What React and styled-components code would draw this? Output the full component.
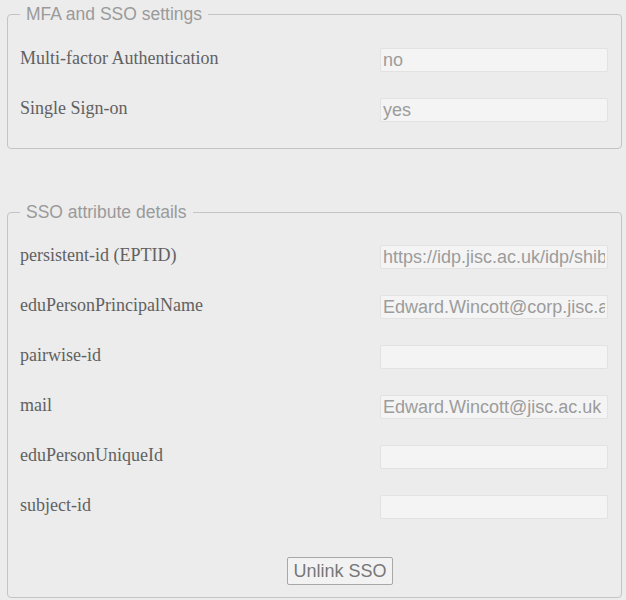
import React from "react";
import styled, { createGlobalStyle } from "styled-components";

const Global = createGlobalStyle`
  html, body { margin: 0; padding: 0; background: #ececec; }
  body { font-family: "Liberation Serif", "Times New Roman", serif; }
`;

const Page = styled.div`
  padding: 4px 4px 0 7px;
  display: flex;
  flex-direction: column;
  gap: 53px;
`;

const Fieldset = styled.fieldset`
  margin: 0;
  border: 1px solid #c4c4c4;
  border-radius: 4px;
  padding: ${(p) => p.$pad};
  min-width: 0;
`;

const Legend = styled.legend`
  font-family: "Liberation Sans", Arial, sans-serif;
  font-size: 17.5px;
  color: #9a9a9a;
  padding: 0 6px;
  margin-left: 0;
`;

const Grid = styled.div`
  display: grid;
  grid-template-columns: 1fr 228px;
  row-gap: 26px;
  align-items: center;
`;

const Label = styled.label`
  font-family: "Liberation Serif", "Times New Roman", serif;
  font-size: 18px;
  color: #616161;
  line-height: 24px;
  margin-top: -4px;
`;

const Input = styled.input`
  box-sizing: border-box;
  width: 228px;
  height: 24px;
  margin: 0;
  padding: 0 2px;
  border: 1px solid #e2e2e2;
  border-radius: 2px;
  background: #f4f4f4;
  font-family: "Liberation Sans", Arial, sans-serif;
  font-size: 18px;
  color: #9c9c9c;
  outline: none;
`;

const ButtonRow = styled.div`
  display: flex;
  justify-content: center;
  padding-left: 52px;
  margin-top: 38px;
`;

const Button = styled.button`
  box-sizing: border-box;
  height: 28px;
  padding: 0 5px;
  border: 1px solid #a8a8a8;
  border-radius: 2px;
  background: #f2f2f2;
  font-family: "Liberation Sans", Arial, sans-serif;
  font-size: 18px;
  color: #777;
`;

const mfa = [
  ["Multi-factor Authentication", "no"],
  ["Single Sign-on", "yes"],
];

const attrs = [
  ["persistent-id (EPTID)", "https://idp.jisc.ac.uk/idp/shibboleth"],
  ["eduPersonPrincipalName", "Edward.Wincott@corp.jisc.ac.uk"],
  ["pairwise-id", ""],
  ["mail", "Edward.Wincott@jisc.ac.uk"],
  ["eduPersonUniqueId", ""],
  ["subject-id", ""],
];

function Rows({ items }) {
  return (
    <Grid>
      {items.map(([l, v]) => (
        <React.Fragment key={l}>
          <Label>{l}</Label>
          <Input readOnly value={v} />
        </React.Fragment>
      ))}
    </Grid>
  );
}

export default function App() {
  return (
    <>
      <Global />
      <Page>
        <Fieldset $pad="23px 13px 26px 12px">
          <Legend>MFA and SSO settings</Legend>
          <Rows items={mfa} />
        </Fieldset>
        <Fieldset $pad="22px 13px 12px 12px">
          <Legend>SSO attribute details</Legend>
          <Rows items={attrs} />
          <ButtonRow>
            <Button>Unlink SSO</Button>
          </ButtonRow>
        </Fieldset>
      </Page>
    </>
  );
}
